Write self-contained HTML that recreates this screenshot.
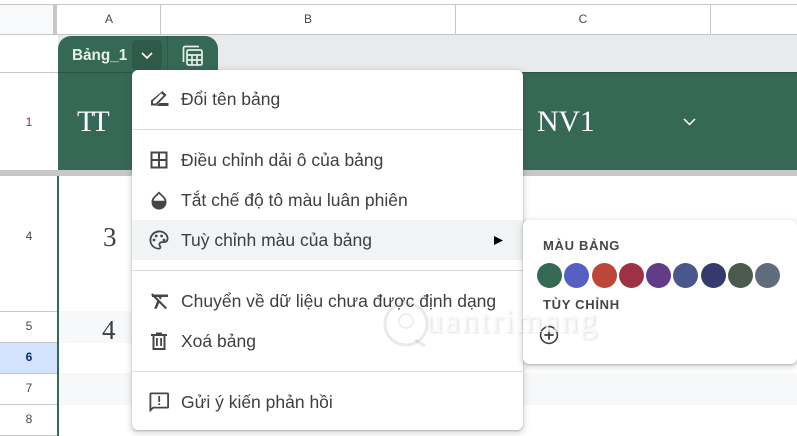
<!DOCTYPE html>
<html><head><meta charset="utf-8"><style>
html,body{margin:0;padding:0;background:#fff}
#p{position:relative;width:797px;height:436px;overflow:hidden;background:#fff;font-family:"Liberation Sans",sans-serif;color:#3c4043}
#p div,#p svg{position:absolute}
.t{white-space:nowrap}
.r{left:0;width:58px;text-align:center;font-size:12px;color:#444746}
.m{left:181px;font-size:17.5px;line-height:20px;color:#3c4043;white-space:nowrap}
.d{left:132px;width:391px;height:1px;background:#dadce0}
.ic{left:148px;width:22px;height:22px;fill:#444746}
.c{width:25px;height:25px;border-radius:50%;top:263px}
.h{font-size:13px;font-weight:bold;letter-spacing:.7px;color:#444746;white-space:nowrap}
</style></head><body><div id="p">
<!-- header -->
<div style="left:0;top:4px;width:797px;height:1px;background:#c4c7c5"></div>
<div style="left:0;top:5px;width:53px;height:29px;background:#f8f9fa"></div>
<div style="left:53px;top:5px;width:4px;height:29px;background:#c7c7c7"></div>
<div style="left:0;top:34px;width:797px;height:1px;background:#c4c7c5"></div>
<div style="left:160px;top:5px;width:1px;height:29px;background:#c4c7c5"></div>
<div style="left:455px;top:5px;width:1px;height:29px;background:#c4c7c5"></div>
<div style="left:710px;top:5px;width:1px;height:29px;background:#c4c7c5"></div>
<div class="t" style="left:58px;width:102px;top:12px;text-align:center;font-size:12px;color:#444746">A</div>
<div class="t" style="left:161px;width:294px;top:12px;text-align:center;font-size:12px;color:#444746">B</div>
<div class="t" style="left:456px;width:254px;top:12px;text-align:center;font-size:12px;color:#444746">C</div>
<!-- band -->
<div style="left:58px;top:35px;width:739px;height:37px;background:#e8eaed"></div>
<div style="left:0;top:72px;width:58px;height:1px;background:#c4c7c5"></div>
<!-- tab -->
<div style="left:58px;top:36px;width:160px;height:37px;background:#366856;border-radius:13px 13px 0 0"></div>
<div class="t" style="left:72px;top:47px;font-size:15.3px;line-height:18px;font-weight:bold;color:#e6eeea">Bảng_1</div>
<div style="left:132px;top:40px;width:30px;height:30px;background:#2f5a4a;border-radius:5px"></div>
<svg style="left:140px;top:51px" width="14" height="10" viewBox="0 0 14 10"><path d="M2 2l5 5 5-5" fill="none" stroke="#fff" stroke-width="1.6"/></svg>
<div style="left:167px;top:36px;width:1px;height:34px;background:#2f5a4a"></div>
<svg style="left:182px;top:45px" width="22" height="22" viewBox="0 0 22 22" fill="none" stroke="#e6eeea" stroke-width="1.7"><path d="M1.500 17V3a1.500 1.500 0 0 1 1.500-1.500h14"/><rect x="5" y="5" width="15" height="15" rx="1.500"/><path d="M5 10h15M5 15h15M10 10v10M15 10v10"/></svg>
<!-- green header -->
<div style="left:58px;top:72px;width:739px;height:99px;background:#366856"></div>
<div style="left:58px;top:72px;width:739px;height:1px;background:#2a5546"></div>
<div class="t" style="left:77px;top:104px;font:30px/36px 'Liberation Serif',serif;letter-spacing:-4px;color:#fff">TT</div>
<div class="t" style="left:537px;top:104px;font:30px/36px 'Liberation Serif',serif;letter-spacing:-.3px;color:#fff">NV1</div>
<svg style="left:682px;top:117px" width="15" height="10" viewBox="0 0 15 10"><path d="M2 2l5.500 5.500L13 2" fill="none" stroke="#fff" stroke-width="1.500"/></svg>
<div class="r" style="top:115px;color:#8a3324">1</div>
<!-- freeze bar -->
<div style="left:0;top:170px;width:797px;height:6px;background:#c7c7c7"></div>
<div style="left:57px;top:176px;width:2px;height:260px;background:#366856"></div>
<!-- rows -->
<div class="r" style="top:229px">4</div>
<div style="left:0;top:311px;width:57px;height:1px;background:#c4c7c5"></div>
<div class="r" style="top:319px">5</div>
<div style="left:0;top:342px;width:57px;height:1px;background:#c4c7c5"></div>
<div style="left:0;top:343px;width:57px;height:30px;background:#d3e3fd"></div>
<div class="r" style="top:350px;font-weight:bold;color:#0b2f6b">6</div>
<div style="left:0;top:373px;width:57px;height:1px;background:#c4c7c5"></div>
<div class="r" style="top:381px">7</div>
<div style="left:0;top:404px;width:57px;height:1px;background:#c4c7c5"></div>
<div class="r" style="top:412px">8</div>
<div style="left:0;top:435px;width:57px;height:1px;background:#c4c7c5"></div>
<div style="left:59px;top:311px;width:738px;height:32px;background:#f6f8f9"></div>
<div style="left:59px;top:373px;width:738px;height:32px;background:#f6f8f9"></div>
<div class="t" style="left:103px;top:222px;font:27px/30px 'Liberation Serif',serif;color:#3c4043">3</div>
<div class="t" style="left:102px;top:315px;font:27px/30px 'Liberation Serif',serif;color:#3c4043">4</div>
<!-- menu -->
<div style="left:132px;top:70px;width:391px;height:360px;background:#fff;border-radius:6px;box-shadow:0 2px 6px 2px rgba(60,64,67,.15),0 1px 2px rgba(60,64,67,.3)"></div>
<div style="left:132px;top:220px;width:391px;height:40px;background:#f1f3f4"></div>
<div class="d" style="top:129px"></div>
<div class="d" style="top:270px"></div>
<div class="d" style="top:371px"></div>
<div class="m" style="top:89px">Đổi tên bảng</div>
<div class="m" style="top:150px">Điều chỉnh dải ô của bảng</div>
<div class="m" style="top:190px">Tắt chế độ tô màu luân phiên</div>
<div class="m" style="top:230px">Tuỳ chỉnh màu của bảng</div>
<div class="m" style="top:291px">Chuyển về dữ liệu chưa được định dạng</div>
<div class="m" style="top:331px">Xoá bảng</div>
<div class="m" style="top:392px">Gửi ý kiến phản hồi</div>
<svg class="ic" style="top:88px" viewBox="0 0 22 22"><path d="M14.500 3l4 4L8.500 17.500H3v-5zM5 13.300V15.500h2.600l8-8-2.300-2.300z" fill-rule="evenodd"/><path d="M11.500 15h9v3H8.500z"/></svg>
<svg class="ic" style="top:149px" viewBox="0 0 22 22"><path d="M2.500 2.500h17v17h-17zM4.500 4.500v5.500h5.500V4.500zM12 4.500v5.500h5.500V4.500zM4.500 12v5.500h5.500V12zM12 12v5.500h5.500V12z" fill-rule="evenodd"/></svg>
<svg class="ic" style="top:189px" viewBox="0 0 22 22"><path d="M11 2.500l5.300 5.300a7.500 7.500 0 1 1-10.600 0zM11 4.900L7 8.900a5.700 5.700 0 0 0-1.500 2.900h11a5.700 5.700 0 0 0-1.500-2.900z" fill-rule="evenodd"/></svg>
<svg class="ic" style="top:229px" viewBox="0 0 22 22"><path d="M11 1.500a9.500 9.500 0 0 0 0 19c1.500 0 2.300-1 2.300-2.200 0-1.300-1-1.700-1-2.800 0-.9.700-1.500 1.700-1.500h2.200a4.300 4.300 0 0 0 4.300-4.300C20.500 5 16.300 1.500 11 1.500zm0 1.800c4.300 0 7.700 2.700 7.700 6.400 0 1.400-1.100 2.500-2.500 2.500H14c-2 0-3.500 1.400-3.500 3.300 0 1.300 1 2 1 2.800 0 .4-.2.600-.5.600a7.700 7.700 0 0 1 0-15.400z"/><circle cx="6" cy="11" r="1.400"/><circle cx="8.200" cy="7" r="1.400"/><circle cx="13.600" cy="7" r="1.400"/><circle cx="16" cy="11" r="1.400"/></svg>
<svg class="ic" style="top:290px" viewBox="0 0 22 22"><path d="M4 4.500h16v2.500h-6.200l-1.200 2.600-2.100-2.100.2-.5H4z"/><path d="M3 4.700l1.500-1.500L19 17.700l-1.500 1.500z"/><path d="M9.300 10.800l2 2-2.700 6h-2.500z"/></svg>
<svg class="ic" style="top:330px" viewBox="0 0 22 22"><path d="M8 2.500h6V4h5v2h-1.500v14h-13V6H3V4h5zM6.500 6v12h9V6z" fill-rule="evenodd"/><path d="M8 8h1.800v8H8zM12.200 8H14v8h-1.800z"/></svg>
<svg class="ic" style="top:391px" viewBox="0 0 22 22"><path d="M3 1.500h16.500A1.500 1.500 0 0 1 21 3v13a1.500 1.500 0 0 1-1.500 1.500H5.500L1.500 21.500V3A1.500 1.500 0 0 1 3 1.500zm.3 1.800v13.800l1.500-1.400h14.400V3.300z" fill-rule="evenodd"/><path d="M10.300 5h1.800v6h-1.800zM10.300 12.200h1.800V14h-1.800z"/></svg>
<svg style="left:494px;top:236px" width="10" height="9" viewBox="0 0 10 9"><path d="M0 0l9 4.500L0 9z" fill="#000"/></svg>
<!-- submenu -->
<div style="left:523px;top:220px;width:274px;height:144px;background:#fff;border-radius:6px;box-shadow:0 2px 6px 2px rgba(60,64,67,.15),0 1px 2px rgba(60,64,67,.3)"></div>
<div class="h" style="left:543px;top:238px">MÀU BẢNG</div>
<div class="h" style="left:543px;top:297px">TÙY CHỈNH</div>
<div class="c" style="left:537px;background:#366856"></div>
<div class="c" style="left:564px;background:#5660c0"></div>
<div class="c" style="left:592px;background:#bb4639"></div>
<div class="c" style="left:619px;background:#9c3244"></div>
<div class="c" style="left:646px;background:#623c88"></div>
<div class="c" style="left:673px;background:#4b568c"></div>
<div class="c" style="left:701px;background:#343b6c"></div>
<div class="c" style="left:728px;background:#4a5a4c"></div>
<div class="c" style="left:755px;background:#5f6d7a"></div>
<svg style="left:539px;top:325px" width="20" height="20" viewBox="0 0 20 20" fill="none" stroke="#3c4043" stroke-width="1.600"><circle cx="10" cy="10" r="8.400"/><path d="M10 5.300v9.400M5.300 10h9.400" stroke-width="1.800"/></svg>
<!-- watermark -->
<div class="t" style="left:426px;top:300px;font:34px/44px 'Liberation Serif',serif;letter-spacing:1.800px;color:rgba(255,255,255,.7);text-shadow:1px 1px 2px rgba(90,90,90,.22)">uantrimang</div>
<svg style="left:381px;top:300px" width="50" height="50" viewBox="0 0 50 50" fill="none" stroke="rgba(150,150,150,.2)" stroke-width="3"><circle cx="25" cy="24" r="21"/><path d="M34 40l10 6"/><circle cx="25" cy="21" r="7" stroke-width="1.500"/></svg>
</div></body></html>
